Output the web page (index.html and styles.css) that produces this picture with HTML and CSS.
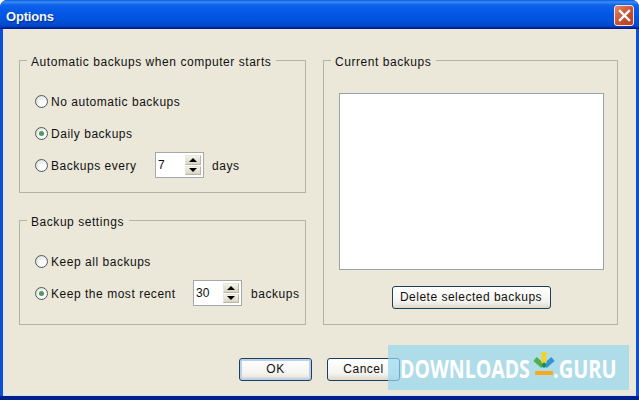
FILE: index.html
```html
<!DOCTYPE html>
<html lang="en">
<head>
<meta charset="utf-8">
<title>Options</title>
<link rel="stylesheet" href="styles.css">
</head>
<body>
<div class="window">
  <header class="titlebar">
    <span class="title">Options</span>
    <span class="close"><svg width="13" height="13" viewBox="0 0 13 13"><path d="M2 2 L11 11 M11 2 L2 11" stroke="#fff" stroke-width="2.4" stroke-linecap="square"/></svg></span>
  </header>
  <main class="client">
    <div class="groups">
      <div class="col">
        <fieldset class="group group-auto">
          <legend>Automatic backups when computer starts</legend>
          <div class="row"><span class="radio"></span><span class="label">No automatic backups</span></div>
          <div class="row"><span class="radio on"></span><span class="label">Daily backups</span></div>
          <div class="row"><span class="radio"></span><span class="label label-every">Backups every</span>
            <span class="spin"><span class="val">7</span><span class="arrows"><span class="arrow up"></span><span class="arrow down"></span></span></span>
            <span class="unit">days</span></div>
        </fieldset>
        <fieldset class="group group-settings">
          <legend>Backup settings</legend>
          <div class="row"><span class="radio"></span><span class="label">Keep all backups</span></div>
          <div class="row"><span class="radio on"></span><span class="label label-recent">Keep the most recent</span>
            <span class="spin"><span class="val">30</span><span class="arrows"><span class="arrow up"></span><span class="arrow down"></span></span></span>
            <span class="unit unit-wide">backups</span></div>
        </fieldset>
      </div>
      <fieldset class="group group-current">
        <legend>Current backups</legend>
        <div class="list"></div>
        <button class="btn btn-delete" type="button">Delete selected backups</button>
      </fieldset>
    </div>
    <div class="actions">
      <button class="btn btn-main default" type="button">OK</button>
      <button class="btn btn-main" type="button">Cancel</button>
    </div>
  </main>
  <aside class="watermark">
    <span class="wm-word wm-downloads">DOWNLOADS</span>
    <svg class="wm-icon" width="24" height="26" viewBox="0 0 24 26">
      <path d="M3 9 L11 16" stroke="#4fb04f" stroke-width="5" fill="none"/>
      <path d="M21 9 L13 16" stroke="#2f96d8" stroke-width="5" fill="none"/>
      <path d="M12 2 V13" stroke="#f6d32a" stroke-width="5" fill="none"/>
      <path d="M12 12 L9.500 16 L12 18 L14.500 16 Z" fill="#1f8a5a"/>
      <rect x="3" y="21" width="18" height="4" rx="1" fill="#f5ab1c"/>
    </svg>
    <span class="wm-word wm-guru">.GURU</span>
  </aside>
</div>
</body>
</html>
```
FILE: styles.css
```css
* { box-sizing: border-box; }
html, body { margin: 0; height: 100%; background: #fff; }
body { font: 12px/15px "Liberation Sans", Arial, sans-serif; color: #111; }

.window {
  position: relative;
  width: 639px;
  height: 400px;
  display: flex;
  flex-direction: column;
  border-radius: 7px 7px 0 0;
  overflow: hidden;
  background: #0a4fd6;
}
.titlebar {
  height: 29px;
  flex: none;
  display: flex;
  align-items: center;
  justify-content: space-between;
  padding: 4px 5px 2px 6px;
  background: linear-gradient(#0a5ae0 0, #3a8cf4 2px, #0f62ea 5px, #0358e6 12px, #0052de 20px, #0248c8 26px, #00209c 28px, #00138c 29px);
}
.title {
  padding-top: 2px;
  font: bold 13px/16px "Liberation Sans", Arial, sans-serif;
  letter-spacing: -.2px;
  color: #f2f8ff;
  text-shadow: 1px 1px 1px #0b2f90;
}
.close {
  width: 20px;
  height: 21px;
  display: flex;
  align-items: center;
  justify-content: center;
  border: 1px solid #f2e4dc;
  border-radius: 3px;
  background: linear-gradient(135deg, #e08a6c, #c8502f 55%, #b5401f);
}
.client {
  flex: 1;
  margin: 0 3px 3px;
  padding: 22px 18px 0 16px;
  background: #ebe8da;
  border-bottom: 2px solid #d8e2ea;
}
.window::after {
  content: "";
  position: absolute;
  left: 0;
  right: 0;
  bottom: 0;
  height: 4px;
  background: #00208e;
}
.groups {
  display: flex;
  gap: 17px;
}
.col {
  width: 287px;
  display: flex;
  flex-direction: column;
  gap: 18px;
}
.group {
  margin: 0;
  min-width: 0;
  border: 1px solid #b3b3a4;
  padding: 15px 0 0 15px;
}
.group legend {
  margin-left: -8px;
  padding: 4px 5px 0 4px;
  letter-spacing: .55px;
  line-height: 15px;
}
.group-auto { height: 142px; }
.group-settings { height: 114px; }
.group-current {
  width: 295px;
  height: 274px;
  padding: 23px 14px 0 15px;
  display: flex;
  flex-direction: column;
  align-items: center;
}
.row {
  height: 32px;
  display: flex;
  align-items: center;
  letter-spacing: .53px;
}
.label, .unit { padding-top: 2px; }
.radio {
  position: relative;
  width: 13px;
  height: 13px;
  margin-right: 3px;
  flex: none;
  border: 1px solid #4d5a66;
  border-radius: 50%;
  background: radial-gradient(circle at 65% 65%, #fbfbf8 30%, #dcdcd4 90%);
}
.radio.on::after {
  content: "";
  position: absolute;
  left: 3px;
  top: 3px;
  width: 5px;
  height: 5px;
  border-radius: 50%;
  background: #4f9a5c;
}
.label-every { width: 104px; }
.label-recent { width: 142px; }
.spin {
  width: 49px;
  height: 26px;
  flex: none;
  display: flex;
  justify-content: space-between;
  padding: 2px;
  border: 1px solid #a3a9a9;
  background: #fff;
}
.val { line-height: 15px; letter-spacing: 0; padding-top: 3px; }
.arrows {
  width: 16px;
  display: flex;
  flex-direction: column;
  gap: 1px;
}
.arrow {
  flex: 1;
  display: flex;
  align-items: center;
  justify-content: center;
  background: linear-gradient(#f4f3ea, #d8d5c2);
  border: 1px solid #e8e6d8;
  border-right-color: #b8b5a2;
  border-bottom-color: #b8b5a2;
}
.arrow::before {
  content: "";
  border-left: 4px solid transparent;
  border-right: 4px solid transparent;
}
.up::before { border-bottom: 4px solid #000; }
.down::before { border-top: 4px solid #000; }
.unit { margin-left: 8px; }
.unit-wide { margin-left: 9px; }
.list {
  width: 265px;
  height: 177px;
  flex: none;
  background: #fff;
  border: 1px solid #98a4a4;
}
.btn {
  font: 12px/15px "Liberation Sans", Arial, sans-serif;
  letter-spacing: .5px;
  color: #111;
  padding: 0;
  height: 23px;
  border: 1px solid #1c3f5e;
  border-radius: 3px;
  background: linear-gradient(#fff, #f4f3ee 70%, #dcd8cc);
}
.btn-delete { width: 159px; margin-top: 16px; }
.actions {
  display: flex;
  gap: 15px;
  margin-top: 33px;
  padding-left: 220px;
}
.btn-main { width: 73px; }
.default {
  box-shadow: inset 0 0 0 2px #bcd0ec;
}
.watermark {
  position: absolute;
  left: 388px;
  top: 345px;
  width: 241px;
  height: 45px;
  display: flex;
  align-items: center;
  padding: 1px 0 0 12px;
  background: rgba(150, 215, 240, .7);
  color: #fff;
  font: bold 25px/30px "Open Sans", sans-serif;
}
.wm-word {
  display: block;
  flex: none;
  transform-origin: left center;
  white-space: nowrap;
}
.wm-downloads { width: 132px; transform: scaleX(.78); }
.wm-icon { flex: none; margin: 0 -3px 10px 0; }
.wm-guru { width: 60px; transform: scaleX(.8); }
```
